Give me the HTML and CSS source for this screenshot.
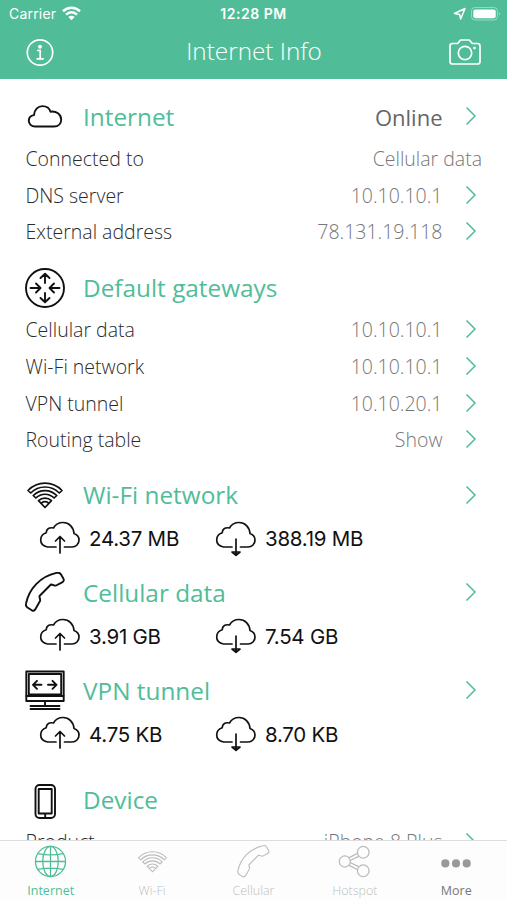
FILE: index.html
```html
<!DOCTYPE html>
<html lang="en">
<head>
<meta charset="utf-8">
<title>Internet Info</title>
<link rel="stylesheet" href="styles.css">
</head>
<body>
<svg class="defs" width="0" height="0">
  <symbol id="chevron" viewBox="0 0 12 20"><path d="M1.500 1.500 10 10 1.500 18.500"/></symbol>
  <symbol id="cloud-up" viewBox="0 0 42 38"><path d="M17 27H8.500C4.400 26.200 1.700 23.500 1.700 20c0-4 2.700-6.500 5.500-7.300C7.300 9 10.500 7 14.500 8 16.500 4.500 20 2.500 24 2.500c6 0 10.500 4.500 11 11 3 1 5 3.500 5 6.500 0 4-3 7-7 7h-7.500M21 33V17M16.500 21l4.500-4.500 4.500 4.500"/></symbol>
  <symbol id="cloud-down" viewBox="0 0 42 38"><path d="M17 27H8.500C4.400 26.200 1.700 23.500 1.700 20c0-4 2.700-6.500 5.500-7.300C7.300 9 10.500 7 14.500 8 16.500 4.500 20 2.500 24 2.500c6 0 10.500 4.500 11 11 3 1 5 3.500 5 6.500 0 4-3 7-7 7h-7.500M21 19v16M17 32l4 3.300 4-3.300z"/></symbol>
  <symbol id="wifi" viewBox="0 0 40 40"><path d="M3 15.500C12.500 5.700 27.500 5.700 37 15.500l-2.700 2.500c-8-8-20.600-8-28.600 0zM8.200 20.500c6.600-6.600 17-6.600 23.600 0l-2.700 2.500c-5.200-5-13-5-18.200 0zM13.500 25.700c3.700-3.500 9.300-3.500 13 0L20 32.500z"/><path d="M16.500 28c2.200-1.600 4.800-1.600 7 0"/></symbol>
  <symbol id="phone" viewBox="0 0 40 40"><path d="M31.500.9c2-.5 3.200-.2 4.200 1.200l2.700 4.500c.8 1.600.3 3-1.300 3.700l-6 3.200c-1.600.7-3.400-1.300-5.200-1L14.500 24c-.3 1.800 1.200 3.400.5 5L10.500 37c-.8 1.600-2.100 2.100-3.700 1.300l-4.400-2.800c-1.400-1-1.800-2.300-1.300-4.200C4 17 15 4.500 31.500.9z"/></symbol>
</svg>

<div class="screen">
  <header class="top">
    <div class="status">
      <div class="carrier"><span>Carrier</span>
        <svg width="19" height="15" viewBox="0 0 19 15" fill="none" stroke="#fff" stroke-width="2.600"><path d="M1 5.200c5-4.600 12-4.600 17 0M4 8.600c3.300-3 7.700-3 11 0"/><path d="M6.300 11q3.200-2.600 6.400 0L9.500 14.200z" fill="#fff" stroke="none"/></svg>
      </div>
      <div class="clock">12:28 PM</div>
      <div class="battery">
        <svg width="48" height="16" viewBox="0 0 48 16"><path d="M1.500 7.500 12 2.500 7.700 13 6.600 8.500z" fill="none" stroke="#fff" stroke-width="1.500" stroke-linejoin="round"/><rect x="18.500" y="1.500" width="26" height="12.500" rx="3.500" fill="none" stroke="#fff" stroke-opacity=".4"/><rect x="20.300" y="3.500" width="22.400" height="8.700" rx="2" fill="#fff"/><path d="M46 6q2 1.700 0 3.500z" fill="#fff" opacity=".5"/></svg>
      </div>
    </div>
    <nav class="titlebar">
      <svg width="28" height="28" viewBox="0 0 28 28" fill="none" stroke="#fff" stroke-width="1.700"><circle cx="14" cy="14.500" r="12.700"/><circle cx="14" cy="8.700" r="1.100" fill="#fff"/><path d="M11 12.500h3.200v8M10.500 20.800h7.200"/></svg>
      <h1>Internet Info</h1>
      <svg width="34" height="28" viewBox="0 0 34 28" fill="none" stroke="#fff" stroke-width="1.700" stroke-linejoin="round"><path d="M4.500 5.500h5.200L12.500 2h8.800l3 3.500h5.200q2.500 0 2.500 2.500v15.500q0 2.500-2.500 2.500h-25Q2 26 2 23.500V8q0-2.500 2.500-2.500z"/><circle cx="17" cy="15" r="6.700"/><circle cx="26.500" cy="10" r="1" fill="#fff" stroke-width="1"/></svg>
    </nav>
  </header>

  <main class="content">
    <section>
      <div class="head">
        <svg class="icon" viewBox="0 0 40 40"><path d="M10 29.500c-3.600 0-6.200-2.500-6.200-5.700 0-3 2.200-5.300 5.200-5.700.3-5.500 3.800-9 8.500-9 4 0 7 2.300 8 5.600 5.800-.9 10.700 2.600 10.700 7.800 0 4.200-3 7-7 7z"/></svg>
        <h2>Internet</h2><span class="value">Online</span><svg class="chev"><use href="#chevron"/></svg>
      </div>
      <div class="row"><span>Connected to</span><span class="value plain">Cellular data</span></div>
      <div class="row"><span>DNS server</span><span class="value">10.10.10.1</span><svg class="chev"><use href="#chevron"/></svg></div>
      <div class="row"><span>External address</span><span class="value">78.131.19.118</span><svg class="chev"><use href="#chevron"/></svg></div>
    </section>

    <section>
      <div class="head">
        <svg class="icon" viewBox="0 0 40 40"><circle cx="20" cy="20" r="19"/><path d="M20 15V6M15.500 10 20 5.700l4.500 4.300M20 25V34M15.500 30l4.500 4.300 4.500-4.300M5.500 20H15M11 15.500l4.500 4.500-4.500 4.500M34.500 20H25M29 15.500 24.500 20l4.500 4.500"/></svg>
        <h2>Default gateways</h2>
      </div>
      <div class="row"><span>Cellular data</span><span class="value">10.10.10.1</span><svg class="chev"><use href="#chevron"/></svg></div>
      <div class="row"><span>Wi-Fi network</span><span class="value">10.10.10.1</span><svg class="chev"><use href="#chevron"/></svg></div>
      <div class="row"><span>VPN tunnel</span><span class="value">10.10.20.1</span><svg class="chev"><use href="#chevron"/></svg></div>
      <div class="row"><span>Routing table</span><span class="value">Show</span><svg class="chev"><use href="#chevron"/></svg></div>
    </section>

    <section>
      <div class="head"><svg class="icon wifi"><use href="#wifi"/></svg><h2>Wi-Fi network</h2><svg class="chev"><use href="#chevron"/></svg></div>
      <div class="traffic">
        <div class="stat"><svg><use href="#cloud-up"/></svg><span>24.37 MB</span></div>
        <div class="stat"><svg><use href="#cloud-down"/></svg><span>388.19 MB</span></div>
      </div>
    </section>

    <section class="near">
      <div class="head"><svg class="icon raised"><use href="#phone"/></svg><h2>Cellular data</h2><svg class="chev"><use href="#chevron"/></svg></div>
      <div class="traffic">
        <div class="stat"><svg><use href="#cloud-up"/></svg><span>3.91 GB</span></div>
        <div class="stat"><svg><use href="#cloud-down"/></svg><span>7.54 GB</span></div>
      </div>
    </section>

    <section class="near">
      <div class="head">
        <svg class="icon raised" viewBox="0 0 40 40"><path d="M1.300 1.500h37.400v29.500h-37.400zM3.800 4h32.400v20.500H3.800zM1 26h38M20 31v4M5.500 36h29M5.500 39h29M8 14.800h8.500M12 10.800l-4 4 4 4M23 14.800h8.500M27.500 10.800l4 4-4 4"/></svg>
        <h2>VPN tunnel</h2><svg class="chev"><use href="#chevron"/></svg>
      </div>
      <div class="traffic">
        <div class="stat"><svg><use href="#cloud-up"/></svg><span>4.75 KB</span></div>
        <div class="stat"><svg><use href="#cloud-down"/></svg><span>8.70 KB</span></div>
      </div>
    </section>

    <section class="far">
      <div class="head">
        <svg class="icon" viewBox="0 0 40 40"><rect x="10.500" y="5" width="19.500" height="33" rx="4"/><path d="M13.700 9h13v24.500h-13zM20.200 33.500v4"/></svg>
        <h2>Device</h2>
      </div>
      <div class="row last"><span>Product</span><span class="value">iPhone 8 Plus</span><svg class="chev"><use href="#chevron"/></svg></div>
    </section>
  </main>

  <footer class="tabs">
    <div class="tab active"><svg viewBox="0 0 34 34"><circle cx="17" cy="17" r="15.500"/><ellipse cx="17" cy="17" rx="8" ry="15.500"/><path d="M17 1.500v31M1.500 17h31M4 9q13 2.500 26 0M4 25q13-2.500 26 0"/></svg><span>Internet</span></div>
    <div class="tab"><svg><use href="#wifi"/></svg><span>Wi-Fi</span></div>
    <div class="tab"><svg><use href="#phone"/></svg><span>Cellular</span></div>
    <div class="tab"><svg viewBox="0 0 34 34"><circle cx="7" cy="17" r="5.700"/><circle cx="26" cy="7.500" r="6"/><circle cx="26" cy="26.500" r="6"/><path d="m11.500 13 8.800-4.500M12.500 16l8.700-4.300M12.500 18l8.700 4.300M11.500 21l8.800 4.500"/></svg><span>Hotspot</span></div>
    <div class="tab more"><svg viewBox="0 0 34 34"><circle cx="5.500" cy="19" r="4.200"/><circle cx="16.500" cy="19" r="4.200"/><circle cx="27.500" cy="19" r="4.200"/></svg><span>More</span></div>
  </footer>
</div>
</body>
</html>
```

FILE: styles.css
```css
* { box-sizing: border-box; }
body { margin: 0; background: #fff; font-family: "Open Sans", sans-serif; font-weight: 300; }
.defs { display: block; height: 0; }
.screen { display: flex; flex-direction: column; width: 507px; height: 900px; overflow: hidden; }
.top { flex: none; height: 79px; background: #50bd98; color: #fff; }
.status { display: grid; grid-template-columns: 1fr auto 1fr; align-items: center; height: 27px; padding: 0 6px 0 9px; font-family: Inter, sans-serif; font-weight: 400; font-size: 14px; }
.carrier { display: flex; align-items: center; gap: 6px; letter-spacing: .2px; }
.clock { margin-left: -3px; font-weight: 600; font-size: 14px; letter-spacing: .5px; }
.battery { display: flex; justify-content: flex-end; }
.titlebar { display: flex; align-items: center; justify-content: space-between; height: 50px; padding: 0 25px 0 26px; }
h1, h2 { margin: 0; font-weight: 300; white-space: nowrap; }
h1 { padding: 0 0 3px 6px; font-size: 24.300px; }
.content { flex: 1; min-height: 0; overflow: hidden; padding: 13.500px 25px 0; }
section + section { margin-top: 13.300px; }
section.near { margin-top: 11.700px; }
section.far { margin-top: 23.600px; }
.head, .row { display: flex; align-items: center; white-space: nowrap; }
.head { height: 48px; }
.row { height: 36.600px; font-size: 19.500px; color: #2b2b2b; }
.row:nth-child(3) span, .row:nth-child(4) span { padding-bottom: 0; }
.row span { padding-bottom: 1px; }
.row.last span { padding-bottom: 2px; }
.row > span:first-child { padding-left: .5px; }
.icon { width: 40px; height: 40px; margin-right: 18px; overflow: visible; fill: none; stroke: #111; stroke-width: 1.900; stroke-linejoin: round; stroke-linecap: round; }
.icon.wifi { stroke-width: 1.700; }
.icon.raised { margin-bottom: 1.500px; }
h2 { padding-bottom: 1px; font-size: 24.350px; font-weight: 400; color: #50bd98; }
.value { margin-left: auto; color: #777; }
.head .value { font-size: 22px; font-weight: 400; color: #666; }
.chev { width: 12px; height: 20px; margin: 0 5px 1px 22.500px; fill: none; stroke: #50bd98; stroke-width: 1.500; }
h2 + .chev { margin-left: auto; }
.traffic { display: grid; grid-template-columns: 176px 1fr; height: 38px; padding-left: 14px; }
.stat { display: flex; align-items: center; gap: 8px; padding-top: .500px; font-family: Inter, sans-serif; font-weight: 400; font-size: 20.500px; letter-spacing: -.25px; color: #111; }
.stat svg { width: 42px; height: 38px; fill: none; stroke: #111; stroke-width: 1.700; stroke-linejoin: round; stroke-linecap: round; }
.tabs { flex: none; display: grid; grid-template-columns: repeat(5, 1fr); height: 60px; border-top: 1px solid #ddd; background: #fdfdfd; }
.tab { display: flex; flex-direction: column; align-items: center; padding: 4px 0 0; font-size: 12.500px; line-height: 18px; color: #bdbdbd; }
.tab span { margin-top: 4px; }
.tab svg { width: 33px; height: 33px; overflow: visible; fill: none; stroke: #bbb; stroke-width: 1.300; }
.tab.active { color: #50bd98; font-weight: 400; }
.tab.active svg { stroke: #50bd98; }
.tab.more { color: #777; font-weight: 400; }
.tab.more svg { fill: #999; stroke: none; }
```
